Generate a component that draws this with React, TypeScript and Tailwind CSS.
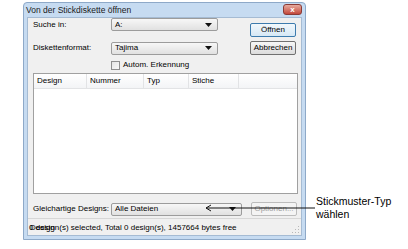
import React from 'react';

const font = { fontFamily: '"Liberation Sans", Arial, sans-serif' };

const Arrow = () => (
  <svg width="7" height="4" viewBox="0 0 7 4" className="shrink-0">
    <path d="M0 0 H7 L3.5 4 Z" fill="#111" />
  </svg>
);

const Combo: React.FC<{ value: string; width: string }> = ({ value, width }) => (
  <div
    className={`${width} h-[13px] flex items-center justify-between pl-[3px] pr-[5px] rounded-[2px] border border-[#9c9c9c] bg-gradient-to-b from-[#f7f7f7] to-[#e1e1e1] text-[8px] text-black`}
  >
    <span>{value}</span>
    <Arrow />
  </div>
);

const Btn: React.FC<{ label: string; primary?: boolean; disabled?: boolean }> = ({ label, primary, disabled }) => (
  <div
    className={`w-[46px] h-[14px] flex items-center justify-center rounded-[2px] border text-[8px] ${
      primary
        ? 'border-[#3d7bad] bg-gradient-to-b from-[#f2f8fc] to-[#d6e8f5] text-black'
        : disabled
        ? 'border-[#bcbcbc] bg-[#f4f4f4] text-[#a0a0a0]'
        : 'border-[#707070] bg-gradient-to-b from-[#f6f6f6] to-[#dcdcdc] text-black'
    }`}
  >
    {label}
  </div>
);

export default function App() {
  const columns = [
    { name: 'Design', w: 'w-[53px]' },
    { name: 'Nummer', w: 'w-[57px]' },
    { name: 'Typ', w: 'w-[45px]' },
    { name: 'Stiche', w: 'w-[50px]' },
  ];

  return (
    <div className="relative w-[408px] h-[249px] bg-white overflow-hidden" style={font}>
      {/* Dialog window */}
      <div className="ml-[23px] mt-[2px] w-[283px] h-[238px] flex flex-col bg-[#c6dbf1] border border-[#8ea9c8] rounded-t-[4px] px-[3px] pb-[3px]">
        {/* Title bar */}
        <div className="h-[14px] flex items-center justify-between">
          <span className="text-[8.5px] text-[#1a1a1a] -ml-[1px]">Von der Stickdiskette öffnen</span>
          <div className="w-[19px] h-[11px] -mt-[1px] flex items-center justify-center rounded-[3px] border border-[#8a3a35] bg-gradient-to-b from-[#e6aa9f] to-[#c2463a]">
            <span className="text-[8px] leading-none font-bold text-white">x</span>
          </div>
        </div>

        {/* Client area */}
        <div className="flex-1 flex flex-col bg-[#f0f0f0] border border-[#a5bbd3] text-[8px] text-black">
          {/* Row: Suche in */}
          <div className="flex items-start pl-[5px] h-[20px]">
            <span className="w-[78px] mt-[1px]">Suche in:</span>
            <Combo value="A:" width="w-[107px]" />
            <div className="ml-[32px] mt-[5px]">
              <Btn label="Öffnen" primary />
            </div>
          </div>

          {/* Row: Diskettenformat */}
          <div className="flex items-center pl-[5px] mt-[3px]">
            <span className="w-[78px]">Diskettenformat:</span>
            <Combo value="Tajima" width="w-[107px]" />
            <div className="ml-[32px]">
              <Btn label="Abbrechen" />
            </div>
          </div>

          {/* Checkbox */}
          <div className="flex items-center ml-[83px] mt-[4px] gap-[3px]">
            <div className="w-[9px] h-[9px] border border-[#8f8f8f] bg-gradient-to-br from-[#e4e4e4] to-[#f8f8f8]" />
            <span>Autom. Erkennung</span>
          </div>

          {/* List */}
          <div className="ml-[5px] mt-[2px] w-[265px] h-[121px] flex flex-col bg-white border border-[#a0a0a0]">
            <div className="h-[15px] flex bg-gradient-to-b from-white to-[#f3f4f6] border-b border-[#e2e3e5]">
              {columns.map((c) => (
                <div key={c.name} className={`${c.w} flex items-center pl-[3px] border-r border-[#e2e3e5]`}>
                  {c.name}
                </div>
              ))}
            </div>
          </div>

          {/* Gleichartige Designs */}
          <div className="flex items-center pl-[5px] mt-[8px]">
            <span className="w-[78px]">Gleichartige Designs:</span>
            <Combo value="Alle Dateien" width="w-[131px]" />
            <div className="ml-[9px]">
              <Btn label="Optionen..." disabled />
            </div>
          </div>

          {/* Status bar */}
          <div className="relative mt-auto h-[17px] flex items-center justify-between border-t border-[#d7d7d7] bg-[#f0f0f0] pl-[1px] pt-[2px]">
            <span className="relative">
              0 design(s) selected, Total 0 design(s), 1457664 bytes free
              <span className="absolute left-[1px] top-0">Design</span>
            </span>
            <svg width="10" height="10" viewBox="0 0 10 10" className="self-end mr-[1px] mb-[1px]">
              {[
                [8, 2], [8, 5], [5, 5], [8, 8], [5, 8], [2, 8],
              ].map(([x, y], i) => (
                <rect key={i} x={x} y={y} width="1" height="1" fill="#b8b8b8" />
              ))}
            </svg>
          </div>
        </div>
      </div>

      {/* Callout */}
      <div className="absolute left-[205px] top-[204px] flex items-center">
        <svg width="110" height="8" viewBox="0 0 110 8">
          <path d="M1 4 H110" stroke="#111" strokeWidth="1" />
          <path d="M6 1 L1 4 L6 7" stroke="#111" strokeWidth="1" fill="none" />
        </svg>
      </div>
      <div className="absolute left-[316px] top-[195px] text-[10.5px] leading-[13px] text-black">
        <div>Stickmuster-Typ</div>
        <div>wählen</div>
      </div>
    </div>
  );
}
